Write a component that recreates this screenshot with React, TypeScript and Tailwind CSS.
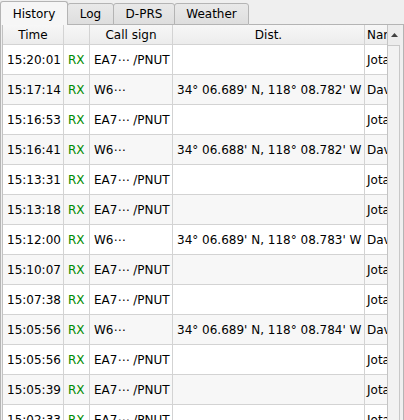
import React from "react";

type Row = { time: string; call: string; dist: string; name: string };

const ea7 = (time: string): Row => ({ time, call: "EA7⋯ /PNUT", dist: "", name: "Jota" });
const w6 = (time: string, dist: string): Row => ({ time, call: "W6⋯", dist, name: "Dave" });

const rows: Row[] = [
  ea7("15:20:01"),
  w6("15:17:14", "34° 06.689' N, 118° 08.782' W"),
  ea7("15:16:53"),
  w6("15:16:41", "34° 06.688' N, 118° 08.782' W"),
  ea7("15:13:31"),
  ea7("15:13:18"),
  w6("15:12:00", "34° 06.689' N, 118° 08.783' W"),
  ea7("15:10:07"),
  ea7("15:07:38"),
  w6("15:05:56", "34° 06.689' N, 118° 08.784' W"),
  ea7("15:05:56"),
  ea7("15:05:39"),
  ea7("15:02:33"),
];

const tabs = ["History", "Log", "D-PRS", "Weather"];

export default function App() {
  return (
    <div
      className="w-[404px] h-[420px] overflow-hidden bg-[#efefef] text-[12px] text-black flex flex-col"
      style={{ fontFamily: '"DejaVu Sans", sans-serif' }}
    >
      {/* tab bar */}
      <div className="flex items-end h-[25px] shrink-0">
        {tabs.map((t, i) =>
          i === 0 ? (
            <div
              key={t}
              className="h-[24px] w-[68px] border-t border-l border-r border-[#b4b4b4] rounded-t-[3px] bg-[#f6f6f6] flex items-center justify-center"
            >
              {t}
            </div>
          ) : (
            <div
              key={t}
              className={`h-[22px] -ml-px border border-[#b4b4b4] rounded-t-[3px] bg-gradient-to-b from-[#e9e9e9] to-[#dedede] flex items-center justify-center ${
                t === "Log" ? "w-[47px]" : t === "D-PRS" ? "w-[62px]" : "w-[75px]"
              }`}
            >
              {t}
            </div>
          )
        )}
        <div className="flex-1 border-b border-[#b4b4b4]" />
      </div>

      {/* pane */}
      <div className="flex-1 flex border-l border-r border-[#b4b4b4] pl-[1px] min-h-0">
        <div className="flex-1 flex border-l border-[#c2c2c2] min-h-0 overflow-hidden">
          <div className="w-[384px] flex flex-col">
            {/* header */}
            <div className="flex h-[20px] shrink-0 border-b border-[#d3d3d3] bg-gradient-to-b from-[#f7f7f7] to-[#ececec]">
              <div className="w-[61px] border-r border-[#d3d3d3] flex items-center justify-center">Time</div>
              <div className="w-[26px] border-r border-[#d3d3d3]" />
              <div className="w-[83px] border-r border-[#d3d3d3] flex items-center justify-center">Call sign</div>
              <div className="w-[192px] border-r border-[#d3d3d3] flex items-center justify-center">Dist.</div>
              <div className="w-[22px] overflow-hidden whitespace-nowrap flex items-center pl-[2px]">Name</div>
            </div>
            {/* rows */}
            {rows.map((r, i) => (
              <div
                key={i}
                className={`flex h-[30px] shrink-0 border-b border-[#d3d3d3] ${i % 2 ? "bg-[#f7f7f7]" : "bg-white"}`}
              >
                <div className="w-[61px] border-r border-[#d3d3d3] flex items-center pl-[4px]">{r.time}</div>
                <div className="w-[26px] border-r border-[#d3d3d3] flex items-center pl-[4px] text-[#008a00]">RX</div>
                <div className="w-[83px] border-r border-[#d3d3d3] flex items-center pl-[4px] whitespace-nowrap">{r.call}</div>
                <div className="w-[192px] border-r border-[#d3d3d3] flex items-center pl-[4px] whitespace-nowrap overflow-hidden">
                  {r.dist}
                </div>
                <div className="w-[22px] overflow-hidden whitespace-nowrap flex items-center pl-[2px]">{r.name}</div>
              </div>
            ))}
          </div>
          {/* vertical scrollbar */}
          <div className="w-[13px] shrink-0 border-l border-[#c4c4c4] bg-[#ececec] flex flex-col">
            <div className="h-[20px] flex items-center justify-center">
              <svg width="7" height="4" viewBox="0 0 7 4">
                <path d="M0 4 L3.5 0 L7 4 Z" fill="#404040" />
              </svg>
            </div>
            <div className="flex-1 border-t border-r border-[#c8c8c8] bg-[#f2f2f2]" />
          </div>
          <div className="w-[3px] shrink-0" />
        </div>
      </div>
    </div>
  );
}
